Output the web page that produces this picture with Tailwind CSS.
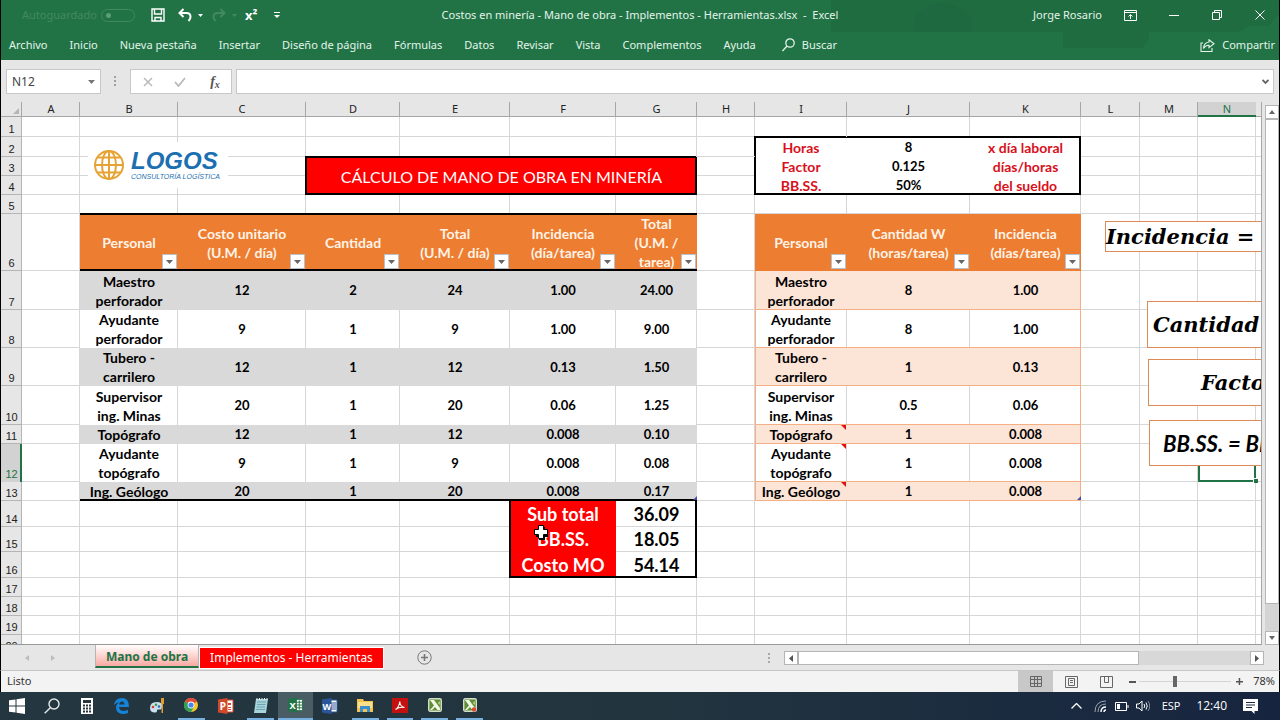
<!DOCTYPE html>
<html lang="es">
<head>
    <meta charset="UTF-8">
    <meta name="viewport" content="width=device-width, initial-scale=1.0">
    <title>Costos en minería - Mano de obra - Implementos - Herramientas.xlsx - Excel</title>
    <script src="https://cdn.jsdelivr.net/npm/@tailwindcss/browser@4"></script>
</head>
<body class="h-screen flex flex-col overflow-hidden bg-[#e6e6e6] font-['Noto_Sans',sans-serif] text-[11px] text-[#333]">
    <!-- Title bar + ribbon tabs -->
    <header class="relative shrink-0 h-[60px] bg-[#217346] text-[#e3f3e9] border-x border-black">
        <svg class="absolute right-0 top-0" width="450" height="60" viewBox="0 0 450 60" fill="#1e663d" aria-hidden="true">
            <path d="M2 0h448v14l-10 12h-20l-10 6h-90v6l-6 10h-80v-16H2z" opacity=".55"/>
            <path d="M88 14q28-24 55 4v14H84z" opacity=".5"/>
        </svg>
        <div class="relative grid grid-cols-[1fr_auto_1fr] items-center h-[30px]">
            <div class="flex items-center pl-[21px]">
                <label for="autosave" class="text-[#43895f]">Autoguardado</label>
                <input id="autosave" type="checkbox" disabled class="appearance-none ml-1 w-[34px] h-[13px] rounded-full border border-[#43895f] relative before:content-[''] before:absolute before:left-1 before:top-[3px] before:size-[5px] before:rounded-full before:bg-[#5c9d77]">
                <button class="ml-4" aria-label="Guardar">
                    <svg width="14" height="14" viewBox="0 0 14 14" fill="none" stroke="#fff" stroke-width="1.4"><path d="M1 1h12v12H1zM3.500 1v5h7V1M4 13V9.500h6V13"/></svg>
                </button>
                <button class="ml-[13px] flex items-center gap-[6px]" aria-label="Deshacer">
                    <svg width="14" height="14" viewBox="0 0 14 14" fill="none" stroke="#fff" stroke-width="2"><path d="M5.500 1L1.500 5l4 4M1.500 5h7q4 0 4 4 0 2-2 4"/></svg>
                    <svg width="5" height="3" viewBox="0 0 5 3" fill="#fff"><path d="M0 0h5L2.500 3z"/></svg>
                </button>
                <button class="ml-[9px] flex items-center gap-[6px]" aria-label="Rehacer" disabled>
                    <svg width="14" height="14" viewBox="0 0 14 14" fill="none" stroke="#43895f" stroke-width="2"><path d="M8.500 1l4 4-4 4M12.500 5h-7q-4 0-4 4 0 2 2 4"/></svg>
                    <svg width="5" height="3" viewBox="0 0 5 3" fill="#43895f"><path d="M0 0h5L2.500 3z"/></svg>
                </button>
                <button class="ml-2 text-[13px] font-bold text-white leading-4" aria-label="Superíndice">x²</button>
                <button class="ml-[17px]" aria-label="Personalizar">
                    <svg width="6" height="7" viewBox="0 0 6 7" fill="#fff"><path d="M0 0h6v1H0zM0 3h6L3 6z"/></svg>
                </button>
            </div>
            <h1 class="whitespace-pre">Costos en minería - Mano de obra - Implementos - Herramientas.xlsx  -  Excel</h1>
            <div class="flex items-center justify-end pr-[14px]">
                <span>Jorge Rosario</span>
                <button class="ml-[22px]" aria-label="Opciones de la cinta"><svg width="13" height="11" viewBox="0 0 13 11" fill="none" stroke="#fff"><path d="M.5.5h12v10H.500zM.500 2.500h12M6.500 9V5M4.500 6.500l2-2 2 2"/></svg></button>
                <button class="ml-8" aria-label="Minimizar"><svg width="10" height="10" viewBox="0 0 10 10" stroke="#fff"><path d="M0 5.500h10"/></svg></button>
                <button class="ml-[33px]" aria-label="Restaurar"><svg width="10" height="10" viewBox="0 0 10 10" fill="none" stroke="#fff"><path d="M.5 2.500h7v7h-7zM2.500 2.500v-2h7v7h-2"/></svg></button>
                <button class="ml-[33px]" aria-label="Cerrar"><svg width="10" height="10" viewBox="0 0 10 10" stroke="#fff"><path d="M.5.5l9 9M9.500.5l-9 9"/></svg></button>
            </div>
        </div>
        <nav class="relative flex items-center gap-[22px] h-[30px] pl-2 pr-1 whitespace-nowrap">
            <button>Archivo</button>
            <button>Inicio</button>
            <button>Nueva pestaña</button>
            <button>Insertar</button>
            <button>Diseño de página</button>
            <button>Fórmulas</button>
            <button>Datos</button>
            <button>Revisar</button>
            <button>Vista</button>
            <button>Complementos</button>
            <button>Ayuda</button>
            <button class="flex items-center gap-[7px] ml-1">
                <svg width="13" height="14" viewBox="0 0 13 14" fill="none" stroke="#e3f3e9" stroke-width="1.300"><circle cx="8" cy="5" r="4.200"/><path d="M5 8L.5 13"/></svg>
                Buscar
            </button>
            <button class="ml-auto flex items-center gap-[7px]">
                <svg width="15" height="13" viewBox="0 0 15 13" fill="none" stroke="#e3f3e9" stroke-width="1.100"><path d="M3 4H1v8.500h11V9M9 .7l5 4-5 4V6.300Q5.500 6 3.500 9.500 4 3.500 9 3z"/></svg>
                Compartir
            </button>
        </nav>
    </header>

    <!-- Formula bar -->
    <div class="shrink-0 h-[42px] flex items-start pt-[9px] px-[5px] border-x border-black">
        <div class="flex w-[95px] h-[25px] bg-white border border-[#c8c8c8] items-center">
            <input aria-label="Cuadro de nombres" value="N12" class="w-full min-w-0 pl-[5px] text-xs text-[#444] outline-none">
            <button class="mr-[5px]" aria-label="Nombres"><svg width="7" height="4" viewBox="0 0 7 4" fill="#777"><path d="M0 0h7L3.500 4z"/></svg></button>
        </div>
        <svg class="ml-[13px] mt-[7px]" width="3" height="12" viewBox="0 0 3 12" fill="#a0a0a0"><path d="M0 0h2v2H0zM0 4h2v2H0zM0 8h2v2H0z"/></svg>
        <div class="ml-[13px] w-[102px] h-[25px] shrink-0 bg-white border border-[#c8c8c8] flex items-center justify-between pl-3 pr-2">
            <button aria-label="Cancelar"><svg width="10" height="10" viewBox="0 0 10 10" stroke="#b9b9b9" stroke-width="1.500"><path d="M1 1l8 8M9 1L1 9"/></svg></button>
            <button aria-label="Introducir"><svg width="12" height="10" viewBox="0 0 12 10" fill="none" stroke="#b9b9b9" stroke-width="1.800"><path d="M1 5l3.500 4L11 1"/></svg></button>
            <button aria-label="Insertar función" class="font-['Liberation_Serif',serif] italic font-bold text-sm leading-4 text-[#555] w-4">f<sub class="text-[10px]">x</sub></button>
        </div>
        <div class="ml-1 flex-1 h-[25px] bg-white border border-[#c8c8c8] flex items-center">
            <input aria-label="Barra de fórmulas" class="flex-1 outline-none px-1">
            <svg class="mr-1" width="7" height="6" viewBox="0 0 7 6" fill="none" stroke="#666" stroke-width="1.800"><path d="M.5 1l3 3 3-3"/></svg>
        </div>
    </div>

    <!-- Sheet -->
    <main class="flex-1 min-h-0 flex border-x border-black">
        <div class="relative flex-1 min-w-0 overflow-hidden bg-white border-b border-[#999]">
            <table class="table-fixed w-[1319px] border-separate border-spacing-0 font-['Lato',sans-serif] text-[14px] leading-[19px] text-center text-black">
                <colgroup id="cols"></colgroup>
                <thead><tr id="letters" class="h-[15px] bg-[#e6e6e6] font-['Noto_Sans',sans-serif] text-[11px] leading-[13px] text-[#222]"></tr></thead>
                <tbody id="rows"></tbody>
            </table>

            <!-- Logo -->
            <div class="absolute left-[87px] top-[40px] w-[140px] h-[46px] bg-white flex items-center gap-[6px] pl-[5px] text-[#1c6fb0] font-['Liberation_Sans',sans-serif] italic">
                <svg class="shrink-0" width="32" height="32" viewBox="0 0 32 32" fill="none" stroke="#e6a334" stroke-width="2"><circle cx="16" cy="16" r="14"/><ellipse cx="16" cy="16" rx="7" ry="14"/><path d="M16 2v28M2 16h28M4.500 8.500h23M4.500 23.500h23"/></svg>
                <div class="whitespace-nowrap">
                    <div class="text-[24px] leading-[24px] font-bold">LOGOS</div>
                    <div class="text-[7px] leading-[8px]">CONSULTORÍA LOGÍSTICA</div>
                </div>
            </div>

            <!-- Formula text boxes -->
            <div class="absolute left-[1104px] top-[119px] w-[300px] h-[31px] bg-white border border-[#dc8a57] flex items-center font-['DejaVu_Serif',serif] italic font-bold text-[21px] text-black">Incidencia =</div>
            <div class="absolute left-[1146px] top-[199px] w-[300px] h-[47px] bg-white border border-[#dc8a57] flex items-center pl-[5px] font-['DejaVu_Serif',serif] italic font-bold text-[21px] text-black">Cantidad W</div>
            <div class="absolute left-[1147px] top-[257px] w-[300px] h-[47px] bg-white border border-[#dc8a57] flex items-center pl-[52px] font-['DejaVu_Serif',serif] italic font-bold text-[21px] text-black">Factor</div>
            <div class="absolute left-[1148px] top-[318px] w-[300px] h-[46px] bg-white border border-[#dc8a57] flex items-center pl-[13px] font-['Lato',sans-serif] italic font-bold text-[22px] text-black whitespace-nowrap">BB.SS. = BB</div>

            <!-- Cell cursor -->
            <svg class="absolute left-[532px] top-[422px]" width="16" height="16" viewBox="0 0 16 16"><path d="M6 3h6v4h3v6h-3v3H6v-3H3V7h3z" fill="#000"/><path d="M5.500 1.500h5v4h4v5h-4v4h-5v-4h-4v-5h4z" fill="#fff" stroke="#000"/></svg>
        </div>

        <!-- Vertical scroll bar -->
        <div class="w-[18px] shrink-0 flex flex-col border-l border-[#a6a6a6] pl-[3px] pt-[3px]">
            <button class="h-[14px] bg-white border border-[#b5b5b5] grid place-items-center" aria-label="Subir"><svg width="6" height="4" viewBox="0 0 6 4" fill="#666"><path d="M0 4h6L3 0z"/></svg></button>
            <div class="flex-1 bg-[#d4d4d4] pb-[27px]"><div class="h-full bg-white border border-[#b5b5b5]"></div></div>
            <button class="h-[14px] bg-white border border-[#b5b5b5] grid place-items-center" aria-label="Bajar"><svg width="6" height="4" viewBox="0 0 6 4" fill="#666"><path d="M0 0h6L3 4z"/></svg></button>
        </div>
    </main>

    <!-- Sheet tabs -->
    <div class="shrink-0 h-[26px] flex items-start border-x border-x-black border-b border-b-[#c6c6c6]">
        <div class="w-[94px] h-[26px] flex items-center gap-[21px] pl-6 text-[#bdbdbd]">
            <svg width="5" height="6" viewBox="0 0 5 6" fill="#bdbdbd"><path d="M4 0v6L0 3z"/></svg>
            <svg width="5" height="6" viewBox="0 0 5 6" fill="#bdbdbd"><path d="M0 0v6l4-3z"/></svg>
        </div>
        <button class="w-[104px] h-[23px] pt-[2px] border-b-2 border-[#217346] border-x border-x-[#b5b5b5] bg-linear-to-b from-white to-[#f7a9a2] text-[#217346] font-bold text-xs">Mano de obra</button>
        <button class="mt-[2px] w-[185px] h-[22px] bg-[#f00] border border-white text-white text-xs">Implementos - Herramientas</button>
        <button class="ml-[33px] mt-[5px]" aria-label="Hoja nueva"><svg width="15" height="15" viewBox="0 0 15 15" fill="none" stroke="#777"><circle cx="7.500" cy="7.500" r="6.700"/><path d="M7.500 4v7M4 7.500h7" stroke-width="1.600"/></svg></button>
        <div class="ml-auto h-[26px] flex items-center">
            <svg width="2" height="11" viewBox="0 0 2 11" fill="#a8a8a8"><path d="M0 0h2v2H0zM0 4h2v2H0zM0 8h2v2H0z"/></svg>
            <div class="ml-[14px] mr-[15px] w-[480px] h-[14px] flex bg-[#d8d8d8]">
                <button class="w-[14px] bg-white border border-[#b5b5b5] grid place-items-center" aria-label="Izquierda"><svg width="4" height="7" viewBox="0 0 4 7" fill="#555"><path d="M4 0v7L0 3.500z"/></svg></button>
                <div class="w-[341px] bg-white border border-[#b5b5b5]"></div>
                <button class="ml-auto w-[14px] bg-white border border-[#b5b5b5] grid place-items-center" aria-label="Derecha"><svg width="4" height="7" viewBox="0 0 4 7" fill="#555"><path d="M0 0v7l4-3.500z"/></svg></button>
            </div>
        </div>
    </div>

    <!-- Status bar -->
    <div class="shrink-0 h-[21px] flex items-center bg-[#f3f3f3] border-x border-black pl-[6px]">
        <span>Listo</span>
        <div class="ml-auto h-full flex items-center">
            <button class="w-[35px] h-full bg-[#c8c8c8] grid place-items-center" aria-label="Normal"><svg width="12" height="11" viewBox="0 0 12 11" fill="none" stroke="#666"><path d="M.5.5h11v10H.500zM4.500.5v10M7.500.5v10M.500 3.500h11M.500 7.500h11"/></svg></button>
            <button class="w-[36px] h-full grid place-items-center" aria-label="Diseño de página"><svg width="13" height="12" viewBox="0 0 13 12" fill="none" stroke="#666"><path d="M.5.5h12v11H.500zM3.500 2.500h6v7h-6zM5 4.500h3M5 6.500h3"/></svg></button>
            <button class="w-[35px] h-full grid place-items-center" aria-label="Salto de página"><svg width="13" height="12" viewBox="0 0 13 12" fill="none" stroke="#666"><path d="M.5.5h12v11H.500zM4.500.5v6h4v-6M8.500 6.500v-6"/></svg></button>
            <button class="ml-[5px]" aria-label="Alejar"><svg width="7" height="7" viewBox="0 0 7 7" fill="#555"><path d="M0 3h7v2H0z"/></svg></button>
            <input type="range" min="10" max="400" value="159" aria-label="Zoom" class="ml-[3px] w-[92px] h-[11px] appearance-none bg-linear-to-b from-transparent from-45% via-[#b5b5b5] via-45% to-transparent to-55% [&::-webkit-slider-thumb]:appearance-none [&::-webkit-slider-thumb]:w-1 [&::-webkit-slider-thumb]:h-[11px] [&::-webkit-slider-thumb]:bg-[#666]">
            <button class="ml-[5px]" aria-label="Acercar"><svg width="7" height="7" viewBox="0 0 7 7" fill="#555"><path d="M0 3h7v1.500H0zM2.700 0h1.500v7H2.700z"/></svg></button>
            <span class="ml-[10px] mr-1">78%</span>
        </div>
    </div>

    <!-- Taskbar -->
    <footer class="shrink-0 h-[28px] flex bg-linear-to-r from-[#24363f] via-[#22353f] to-[#17243f] text-white text-xs">
        <div class="grid grid-cols-14 w-[487px]">
            <button class="grid place-items-center" aria-label="Inicio"><svg width="16" height="16" viewBox="0 0 16 16" fill="#fff"><path d="M0 2.300L6.500 1.400V7.500H0zM7.500 1.200L16 0v7.500H7.500zM0 8.500h6.500v6.100L0 13.700zM7.500 8.500H16V16l-8.500-1.200z"/></svg></button>
            <button class="grid place-items-center" aria-label="Buscar"><svg width="16" height="16" viewBox="0 0 16 16" fill="none" stroke="#e5e9ea" stroke-width="1.400"><circle cx="10" cy="6" r="5"/><path d="M6.300 9.700L.7 15.300"/></svg></button>
            <button class="grid place-items-center" aria-label="Calculadora"><svg width="12" height="16" viewBox="0 0 12 16"><path fill="#fff" d="M0 0h12v16H0z"/><path fill="#26363f" d="M2 2h8v3H2zM2 6.500h2v2H2zM5 6.500h2v2H5zM8 6.500h2v2H8zM2 9.500h2v2H2zM5 9.500h2v2H5zM8 9.500h2v2H8zM2 12.500h2v2H2zM5 12.500h2v2H5zM8 12.500h2v2H8z"/></svg></button>
            <button class="grid place-items-center" aria-label="Edge"><svg width="15" height="16" viewBox="0 0 15 16" fill="#1683d8"><path d="M0 7Q1 0 8 0q7 0 7 9H5q.5 4 4.500 4 2.500 0 4.500-1.300V15q-2.500 1-5 1-7 0-7-6.500Q2 6 5.500 4.300 2.500 4.500 0 7zm5.200-.5h5.300Q10.300 3.500 8 3.500 5.500 3.500 5.200 6.500z"/></svg></button>
            <button class="grid place-items-center" aria-label="Paint"><svg width="16" height="16" viewBox="0 0 16 16"><path d="M1 10q0-6 6.500-6T13 9q0 3-4 2.500-1.500 0-1 1.500 0 2-3 1.500Q1 14 1 10z" fill="#c9dff0"/><circle cx="4" cy="9" r="1.300" fill="#d8402c"/><circle cx="7" cy="6.800" r="1.300" fill="#3c9a43"/><circle cx="10" cy="8.500" r="1.300" fill="#2c6fc0"/><path d="M12 0h3v6h-1v9h-1.500V6H12z" fill="#e09b33"/></svg></button>
            <button class="grid place-items-center border-b-2 border-[#76b0e0] mx-1" aria-label="Chrome"><svg width="14" height="14" viewBox="0 0 14 14"><circle cx="7" cy="7" r="7" fill="#f6c52d"/><path d="M7 7L.9 3.500A7 7 0 0113.100 3.500z" fill="#dd4b3e"/><path d="M7 7L.9 3.500A7 7 0 007 14l3-5z" fill="#2f9e56"/><circle cx="7" cy="7" r="3.400" fill="#fff"/><circle cx="7" cy="7" r="2.600" fill="#4586ee"/></svg></button>
            <button class="grid place-items-center" aria-label="PowerPoint"><svg width="16" height="16" viewBox="0 0 16 16"><path d="M8 2h7v12H8z" fill="#fff" stroke="#d04a2a"/><path d="M10 5h3v2h-3zM10 9h3v1h-3zM10 11h3v1h-3z" fill="#d04a2a"/><path d="M0 1.500L9.500 0v16L0 14.500z" fill="#d04a2a"/><text x="1.800" y="12" font-size="10" font-weight="bold" fill="#fff">P</text></svg></button>
            <button class="grid place-items-center border-b-2 border-[#76b0e0] mx-1" aria-label="Bloc de notas"><svg width="14" height="15" viewBox="0 0 14 15"><path d="M2 1h12l-2 14H0z" fill="#a9d3dc"/><path d="M3 4h9M3 6.500h8.500M2.500 9H11M2 11.500h9" stroke="#6ba3b2"/><path d="M3 0v2M5.500 0v2M8 0v2M10.500 0v2M13 0v2" stroke="#eee"/></svg></button>
            <button class="grid place-items-center border-b-2 border-[#76b0e0] bg-[#4a5d65]" aria-label="Excel"><svg width="15" height="16" viewBox="0 0 16 16"><path d="M8 2h7.500v12H8z" fill="#fff" stroke="#217346"/><path d="M9 5h6M9 8h6M9 11h6M12 3v10" stroke="#217346"/><path d="M0 1.500L9.500 0v16L0 14.500z" fill="#217346"/><text x="1.500" y="12" font-size="10" font-weight="bold" fill="#fff">X</text></svg></button>
            <button class="grid place-items-center" aria-label="Word"><svg width="16" height="16" viewBox="0 0 16 16"><path d="M8 2h7v12H8z" fill="#fff" stroke="#2b579a"/><path d="M9 5h5M9 7h5M9 9h5M9 11h5" stroke="#2b579a"/><path d="M0 1.500L9.500 0v16L0 14.500z" fill="#2b579a"/><text x="0.500" y="11.500" font-size="9" font-weight="bold" fill="#fff">W</text></svg></button>
            <button class="grid place-items-center border-b-2 border-[#76b0e0] mx-1" aria-label="Explorador"><svg width="16" height="14" viewBox="0 0 16 14"><path d="M0 1h6l1 2h9v11H0z" fill="#f3c34e"/><path d="M1 4h14v6H1z" fill="#fbe08c"/><path d="M3 14V8h10v6h-3v-3H6v3z" fill="#3b8ed0"/></svg></button>
            <button class="grid place-items-center border-b-2 border-[#76b0e0] mx-1" aria-label="Acrobat"><svg width="16" height="15" viewBox="0 0 16 15"><path d="M0 0h16v15H0z" fill="#c4100f"/><path d="M3.500 11.500Q7 9.500 7.800 3.500 8 8.500 12.500 9.500 7.500 8.500 3.500 11.500z" fill="none" stroke="#fff" stroke-width="1.100"/></svg></button>
            <button class="grid place-items-center border-b-2 border-[#76b0e0] mx-1" aria-label="Camtasia"><svg width="14" height="14" viewBox="0 0 14 14"><rect x=".7" y=".7" width="12.600" height="12.600" rx="1.500" fill="#5f8f35" stroke="#d5decb" stroke-width="1.400"/><path d="M2 2h4l6 8v2H9.500L7 9l-3 3H2l4-4.500z" fill="#f2f7e8"/><path d="M12 3v4L9.500 5z" fill="#a9cc75"/></svg></button>
            <button class="grid place-items-center border-b-2 border-[#76b0e0] mx-1" aria-label="Grabadora"><svg width="14" height="14" viewBox="0 0 14 14"><rect x=".7" y=".7" width="12.600" height="12.600" rx="1.500" fill="#5f8f35" stroke="#d5decb" stroke-width="1.400"/><path d="M2 2h4l6 8v2H9.500L7 9l-3 3H2l4-4.500z" fill="#f2f7e8"/><path d="M12 3v4L9.500 5z" fill="#a9cc75"/><circle cx="11" cy="11.500" r="2.200" fill="#dc4a30"/></svg></button>
        </div>
        <div class="ml-auto flex items-center pr-[22px]">
            <svg width="11" height="6" viewBox="0 0 11 6" fill="none" stroke="#fff" stroke-width="1.300"><path d="M.5 5.500l5-5 5 5"/></svg>
            <svg class="ml-3" width="13" height="12" viewBox="0 0 13 12" fill="none" stroke="#9aa6b5"><path d="M1 12Q1 1 12 1M4 12q0-8 8-8"/><path d="M7 12q0-5 5-5M10 12q0-2 2-2" stroke="#fff" stroke-width="1.400"/></svg>
            <svg class="ml-2" width="14" height="9" viewBox="0 0 14 9" fill="none" stroke="#fff"><path d="M.5.5h11v8H.500zM13 3v3"/><path d="M2 2h3v5H2z" fill="#fff" stroke="none"/></svg>
            <svg class="ml-[7px]" width="14" height="12" viewBox="0 0 14 12" fill="none" stroke="#fff"><path d="M.5 4h2.500l3-3v10L3 8H.500zM8 4q1.500 2 0 4M10 2.500q2.500 3.500 0 7"/><path d="M12 1q3.500 5 0 10" stroke="#8592a3"/></svg>
            <div class="ml-3 flex gap-4 items-center font-['Open_Sans',sans-serif] text-[11px]">
                <span>ESP</span>
                <span class="text-xs">12:40</span>
                <svg width="15" height="15" viewBox="0 0 15 15"><path d="M0 0h15v12h-3.500v3l-3-3H0z" fill="#fff"/><path d="M3 3.500h9M3 6h9M3 8.500h6" stroke="#1a2740"/></svg>
            </div>
        </div>
    </footer>

    <script>
        const letters = ['A', 'B', 'C', 'D', 'E', 'F', 'G', 'H', 'I', 'J', 'K', 'L', 'M', 'N', 'O'];
        const widths = [58, 98, 128, 94, 110, 106, 81, 58, 92, 123, 111, 59, 58, 58, 64];
        const heights = [20, 20, 19, 19, 19, 57, 39, 38, 38, 39, 19, 38, 19, 26, 25, 26, 19, 19, 19, 19];

        const line = 'shadow-[inset_-1px_-1px_0_#d6d6d6]';
        const head = 'relative font-bold bg-[#ed7d31] text-[#fff3e6]';
        const arrow = '<svg width="7" height="4" viewBox="0 0 7 4" fill="#666"><path d="M0 0h7L3.500 4z"/></svg>';

        // Table data: [row, left table (B-G), right table (I-K)]
        const data = [
            [7, ['Maestro<br>perforador', '12', '2', '24', '1.00', '24.00'], ['8', '1.00']],
            [8, ['Ayudante<br>perforador', '9', '1', '9', '1.00', '9.00'], ['8', '1.00']],
            [9, ['Tubero -<br>carrilero', '12', '1', '12', '0.13', '1.50'], ['1', '0.13']],
            [10, ['Supervisor<br>ing. Minas', '20', '1', '20', '0.06', '1.25'], ['0.5', '0.06']],
            [11, ['Topógrafo', '12', '1', '12', '0.008', '0.10'], ['1', '0.008']],
            [12, ['Ayudante<br>topógrafo', '9', '1', '9', '0.008', '0.08'], ['1', '0.008']],
            [13, ['Ing. Geólogo', '20', '1', '20', '0.008', '0.17'], ['1', '0.008']]
        ];

        // Cells by address: { text, cls, attrs }
        const cells = {};
        const set = (address, text, cls, attrs = '') => { cells[address] = { text, cls, attrs }; };

        const filter = name => `<button aria-label="Filtrar ${name}" class="absolute right-[1px] bottom-[2px] size-[15px] bg-white border border-[#b8c0c8] grid place-items-center">${arrow}</button>`;

        // Merged title D3:G4
        set('D3', 'CÁLCULO DE MANO DE OBRA EN MINERÍA', 'bg-[#f00] text-white text-[16px] shadow-[-1px_-1px_0_#000,inset_1px_1px_0_#000,inset_-2px_-2px_0_#000]', 'colspan="4" rowspan="2"');
        set('C4', '', 'shadow-[inset_-1px_0_0_#000,inset_0_-1px_0_#d6d6d6]');

        set('I2', 'Horas', 'font-bold text-[#d8101c] shadow-[-1px_-1px_0_#000,inset_1px_1px_0_#000]');
        set('J2', '8', 'font-bold text-[13px] shadow-[0_-1px_0_#000,inset_0_1px_0_#000]');
        set('K2', 'x día laboral', 'font-bold text-[#d8101c] shadow-[0_-1px_0_#000,inset_0_1px_0_#000,inset_-2px_0_0_#000]');
        set('I3', 'Factor', 'font-bold text-[#d8101c] shadow-[-1px_0_0_#000,inset_1px_0_0_#000]');
        set('J3', '0.125', 'font-bold text-[13px]');
        set('K3', 'días/horas', 'font-bold text-[#d8101c] shadow-[inset_-2px_0_0_#000]');
        set('I4', 'BB.SS.', 'font-bold text-[#d8101c] shadow-[-1px_0_0_#000,inset_1px_0_0_#000,inset_0_-2px_0_#000]');
        set('J4', '50%', 'font-bold text-[13px] shadow-[inset_0_-2px_0_#000]');
        set('K4', 'del sueldo', 'font-bold text-[#d8101c] shadow-[inset_-2px_-2px_0_#000]');

        ['Personal', 'Costo unitario<br>(U.M. / día)', 'Cantidad', 'Total<br>(U.M. / día)', 'Incidencia<br>(día/tarea)', 'Total<br>(U.M. /<br>tarea)'].forEach((text, i) => {
            set(letters[i + 1] + 6, text + filter(letters[i + 1]), head + ' shadow-[0_-1px_0_#000,inset_0_1px_0_#000,inset_0_-2px_0_#000]');
        });
        ['Personal', 'Cantidad W<br>(horas/tarea)', 'Incidencia<br>(días/tarea)'].forEach((text, i) => {
            set(letters[i + 8] + 6, text + filter(letters[i + 8]), head);
        });

        data.forEach(([row, left, right]) => {
            const banded = row % 2 === 1;
            left.forEach((text, i) => {
                let cls = 'font-bold ' + (banded ? 'bg-[#d9d9d9]' : 'shadow-[inset_-1px_0_0_#d6d6d6]');
                if (i > 0) cls += ' text-[13px]';
                if (row === 13) cls += ' shadow-[inset_0_-2px_0_#000]';
                set(letters[i + 1] + row, text, cls);
            });
            [left[0], ...right].forEach((text, i) => {
                let cls = 'relative font-bold ' + (banded ? 'bg-[#fce4d6] ' : '');
                if (i > 0) cls += 'text-[13px] ';
                if (i === 0) cls += banded ? 'shadow-[inset_1px_-1px_0_#f4b084]' : 'shadow-[inset_1px_-1px_0_#f4b084,inset_-1px_0_0_#d6d6d6]';
                if (i === 1) cls += banded ? 'shadow-[inset_0_-1px_0_#f4b084]' : 'shadow-[inset_0_-1px_0_#f4b084,inset_-1px_0_0_#d6d6d6]';
                if (i === 2) cls += 'shadow-[inset_-1px_-1px_0_#f4b084]';
                // comment markers
                if (i === 0 && row > 10) text += '<svg class="absolute right-[1px] top-0" width="5" height="5" fill="#e01010"><path d="M0 0h5v5z"/></svg>';
                set(letters[i + 8] + row, text, cls);
            });
        });
        // table resize corners
        const corner = '<svg class="absolute right-0 bottom-[1px]" width="4" height="4" fill="#4a4aa0"><path d="M4 0v4H0z"/></svg>';
        cells.G13.text += corner;
        cells.G13.cls += ' relative';
        cells.K13.text += corner;

        [[14, 'Sub total', '36.09'], [15, 'BB.SS.', '18.05'], [16, 'Costo MO', '54.14']].forEach(([row, label, value]) => {
            const last = row === 16;
            set('F' + row, label, 'font-bold text-[18px] bg-[#f00] text-white ' + (last ? 'shadow-[-1px_0_0_#000,inset_1px_0_0_#000,inset_0_-2px_0_#000]' : 'shadow-[-1px_0_0_#000,inset_1px_0_0_#000]'));
            set('G' + row, value, 'font-bold text-[18px] ' + (last ? 'shadow-[inset_-2px_-2px_0_#000]' : 'shadow-[inset_-2px_0_0_#000,inset_0_-1px_0_#d6d6d6]'));
        });

        set('N12', '<span class="absolute -right-[2px] -bottom-[1px] size-[5px] bg-[#217346] border-l border-t border-white"></span>', 'relative shadow-[inset_0_0_0_2px_#217346]');

        const covered = ['E3', 'F3', 'G3', 'D4', 'E4', 'F4', 'G4'];

        document.getElementById('cols').innerHTML = '<col style="width:21px">' + widths.map(w => `<col style="width:${w}px">`).join('');

        document.getElementById('letters').innerHTML =
            '<th class="p-0 shadow-[inset_-1px_-1px_0_#a6a6a6] relative"><svg class="absolute right-[3px] bottom-[3px]" width="6" height="6" fill="#b5b5b5"><path d="M6 0v6H0z"/></svg></th>' +
            letters.map(l => `<th scope="col" class="p-0 align-top font-normal ${l === 'N' ? 'bg-[#d2d2d2] text-[#217346] shadow-[inset_0_-2px_0_#217346]' : 'shadow-[inset_-1px_-1px_0_#a6a6a6]'}">${l}</th>`).join('');

        document.getElementById('rows').innerHTML = heights.map((h, i) => {
            const row = i + 1;
            const active = row === 12 ? 'bg-[#d2d2d2] text-[#217346] shadow-[inset_-2px_0_0_#217346]' : 'bg-[#e6e6e6] text-[#222] shadow-[inset_-1px_-1px_0_#b5b5b5]';
            const tds = letters.map(l => {
                if (covered.includes(l + row)) return '';
                const c = cells[l + row] || { text: '', cls: line, attrs: '' };
                return `<td ${c.attrs} class="p-0 whitespace-nowrap ${c.cls}">${c.text}</td>`;
            }).join('');
            return `<tr style="height:${h}px"><th scope="row" class="p-0 align-bottom font-normal font-['Liberation_Sans',sans-serif] text-[11px] leading-[15px] ${active}">${row}</th>${tds}</tr>`;
        }).join('');
    </script>
</body>
</html>
